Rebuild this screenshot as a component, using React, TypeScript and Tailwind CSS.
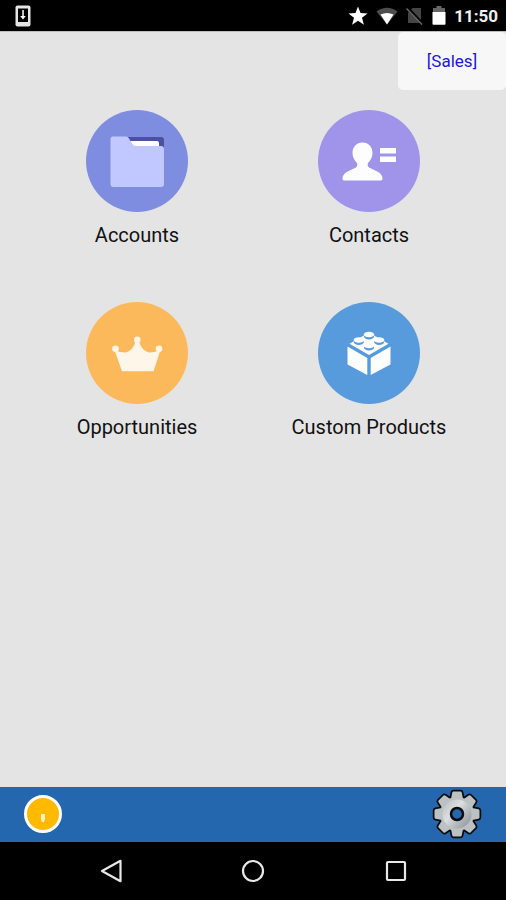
import type { ReactNode } from "react";

function FolderIcon() {
  return (
    <svg viewBox="0 0 102 102" className="size-full" aria-hidden="true">
      <path d="M40 27h35q3 0 3 3v10H46z" fill="#4b529b" />
      <path d="M42 31h29q2 0 2 2v6H46z" fill="#fdfdff" />
      <path d="M26.500 26.500h13.500q2 0 3 2l3 5q1.500 2.500 4 2.500h25q3 0 3 3v35q0 3-3 3H27.500q-3 0-3-3V29q0-2.500 2-2.500z" fill="#c1c8ff" />
    </svg>
  );
}

function ContactIcon() {
  return (
    <svg viewBox="0 0 102 102" className="size-full" fill="#fdfdff" aria-hidden="true">
      <path d="M44.500 32.500c6 0 10 4.500 10 10.500 0 4-2 7.500-4.500 10-1 3 .5 4.500 3 5.500 6 2.500 11.500 5 11.500 10 0 1.500-.8 2-2 2h-36c-1.200 0-2-.5-2-2 0-5 5.500-7.500 11.500-10 2.500-1 4-2.500 3-5.500-2.500-2.500-4.500-6-4.500-10 0-6 4-10.500 10-10.500z" />
      <path d="M62 38h16v5.500H62zM62 46.500h16V52H62z" />
    </svg>
  );
}

function CrownIcon() {
  return (
    <svg viewBox="0 0 102 102" className="size-full" fill="#fff6ea" aria-hidden="true">
      <circle cx="29.500" cy="46.800" r="3.300" />
      <circle cx="51.300" cy="37.800" r="3.300" />
      <circle cx="73" cy="46.800" r="3.300" />
      <path d="M29 48q4 2.500 11 2.500 6.500-2 9.500-10.500h3.600q3 8.500 9.500 10.500 7 0 10.900-2.500l.5 1.500-6.500 19.700H36L29 49.500z" />
    </svg>
  );
}

function BrickIcon() {
  const studs = [
    [51, 33],
    [40.8, 38.5],
    [61.2, 38.5],
    [51, 44],
  ];
  return (
    <svg viewBox="0 0 102 102" className="size-full" fill="#fdfeff" aria-hidden="true">
      <path d="M29.500 44.500L49.300 56v17L29.500 62.500zM72.500 44.500L52.700 56v17l19.800-10.500z" />
      <path d="M31.500 41.700L51 30.500l19.500 11.200L51 53z" />
      {studs.map(([x, y]) => (
        <g key={`${x}-${y}`}>
          <ellipse cx={x} cy={y + 1.5} rx="5" ry="3" fill="#579bdc" />
          <ellipse cx={x} cy={y - 0.5} rx="5.200" ry="2.800" />
        </g>
      ))}
    </svg>
  );
}

function GearIcon() {
  const turns = [0, 45, 90, 135];
  const teeth = turns.map((a) => (
    <path
      key={a}
      d="M-3.500-22.500h7q1 0 1.200 1L6-15v30l-1.300 6.500q-.2 1-1.200 1h-7q-1 0-1.200-1L-6 15v-30l1.300-6.500q.2-1 1.200-1z"
      transform={`rotate(${a})`}
    />
  ));
  return (
    <svg viewBox="-25 -25 50 50" className="size-full" aria-hidden="true">
      <defs>
        <linearGradient id="metal" gradientUnits="userSpaceOnUse" x1="-16" y1="-14" x2="16" y2="14">
          <stop offset="0" stopColor="#b4b9bd" />
          <stop offset="0.4" stopColor="#dcdfe1" />
          <stop offset="0.65" stopColor="#b4b9bd" />
          <stop offset="1" stopColor="#868c91" />
        </linearGradient>
      </defs>
      <g fill="#0a0d10" stroke="#0a0d10" strokeWidth="3.500">
        <circle r="17" />
        {teeth}
      </g>
      <g fill="#bcc1c4">
        <circle r="17" />
        {teeth}
      </g>
      <circle r="14.500" fill="url(#metal)" />
      <circle r="6" fill="#2467ae" stroke="#0a0d10" strokeWidth="2.500" />
    </svg>
  );
}

function StatusBar() {
  return (
    <header className="flex h-[31px] items-center justify-between bg-black pr-2 pl-[15px] text-white">
      <svg viewBox="0 0 16 22" className="h-[22px] w-4" aria-hidden="true">
        <rect x="0.500" y="0.500" width="15" height="21" rx="2" fill="#e6e6e6" />
        <path d="M3 3.500h10v13.500H3z" fill="#000" />
        <path d="M7.300 5h1.500v6h2L8 14.500 5.200 11h2.100z" fill="#fff" />
      </svg>
      <div className="flex items-center">
        <svg viewBox="0 0 20 20" className="mr-2 size-5" fill="#fff" aria-hidden="true">
          <path d="M10 .5l2.500 6.600 7 .3-5.500 4.400 1.900 6.900L10 14.800l-5.900 3.900L6 11.800.5 7.400l7-.3z" />
        </svg>
        <svg viewBox="0 0 22 18" className="mr-2 h-[18px] w-[22px]" aria-hidden="true">
          <path d="M.5 4.500Q11-3 21.500 4.500L11 17.500z" fill="#4d4d4d" />
          <path d="M4.500 7.500q6.500-3 13 0L11 17.500z" fill="#fff" />
        </svg>
        <svg viewBox="0 0 18 18" className="mr-2 size-[18px]" aria-hidden="true">
          <path d="M6.500 1H15v15H2V6z" fill="#454545" />
          <path d="M1 .5L17 17" stroke="#000" strokeWidth="3" />
          <path d="M.5 1.500L16 17.500" stroke="#666" strokeWidth="1.500" />
        </svg>
        <svg viewBox="0 0 14 19" className="mr-2 h-[19px] w-3.5" aria-hidden="true">
          <path d="M4.500 0h5v2H13v5H1V2h3.500z" fill="#666" />
          <path d="M.5 6h13v12q0 .8-1 .8h-11q-1 0-1-.8z" fill="#fff" />
        </svg>
        <time className="text-[17px] leading-6 font-bold text-[#f0f0f0]">11:50</time>
      </div>
    </header>
  );
}

function Tile({ label, color, children }: { label: string; color: string; children: ReactNode }) {
  return (
    <button type="button" className="flex flex-col items-center gap-2.5">
      <span className={`size-[102px] rounded-full ${color}`}>{children}</span>
      <span className="text-[20px] leading-[26px] text-[#111111]">{label}</span>
    </button>
  );
}

export default function App() {
  return (
    <div className="flex min-h-screen flex-col bg-black font-['Roboto','Noto_Sans',sans-serif]">
      <StatusBar />
      <main className="flex-1 border-t border-[#bdbdbd] bg-[#e4e4e4]">
        <div className="flex justify-end">
          <button type="button" className="h-[58px] w-[108px] rounded-[5px] bg-[#f7f7f7] text-[17px] leading-6 text-[#1d16dd]">
            [Sales]
          </button>
        </div>
        <div className="grid grid-cols-2 gap-y-[54px] px-[21px] pt-5">
          <Tile label="Accounts" color="bg-[#7e8de0]"><FolderIcon /></Tile>
          <Tile label="Contacts" color="bg-[#a094ea]"><ContactIcon /></Tile>
          <Tile label="Opportunities" color="bg-[#fcb95b]"><CrownIcon /></Tile>
          <Tile label="Custom Products" color="bg-[#579bdc]"><BrickIcon /></Tile>
        </div>
      </main>
      <div className="flex h-[55px] items-center justify-between bg-[#2467ae] px-6 pb-0.5">
        <button type="button" aria-label="Notifications" className="flex size-[38px] items-center justify-center rounded-full border-[3px] border-white bg-[#ffba00]">
          <svg viewBox="0 0 4 8" className="mt-2 h-2 w-1" fill="#fff3c8" aria-hidden="true">
            <path d="M0 0h4v5L3 8H1L0 5z" />
          </svg>
        </button>
        <button type="button" aria-label="Settings" className="size-[50px]">
          <GearIcon />
        </button>
      </div>
      <nav className="flex h-[58px] items-center justify-between px-[98px]">
        <button type="button" aria-label="Back">
          <svg viewBox="0 0 24 24" className="size-6" fill="none" stroke="#e8e8e8" strokeWidth="2.200" strokeLinejoin="round" aria-hidden="true">
            <path d="M4 12L22.500 1.800v20.400z" />
          </svg>
        </button>
        <button type="button" aria-label="Home">
          <svg viewBox="0 0 24 24" className="size-6" fill="none" stroke="#e8e8e8" strokeWidth="2.200" aria-hidden="true">
            <circle cx="12" cy="12" r="10" />
          </svg>
        </button>
        <button type="button" aria-label="Recent apps">
          <svg viewBox="0 0 24 24" className="size-6" fill="none" stroke="#e8e8e8" strokeWidth="2.200" aria-hidden="true">
            <rect x="3" y="3" width="18" height="18" rx="1" />
          </svg>
        </button>
      </nav>
    </div>
  );
}
